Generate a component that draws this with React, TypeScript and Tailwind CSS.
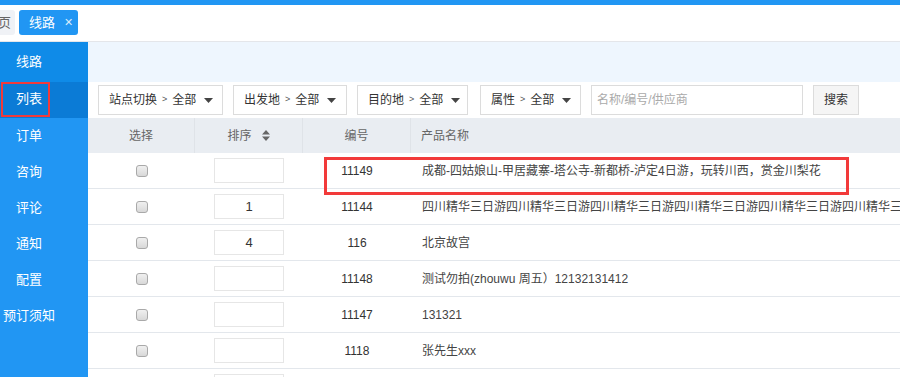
const menu = ['订单', '咨询', '评论', '通知', '配置', '预订须知']

const filters = [
  { label: '站点切换', cls: 'w-[125px]' },
  { label: '出发地', cls: 'w-[114px] ml-[10px]' },
  { label: '目的地', cls: 'w-[111px] ml-[10px]' },
  { label: '属性', cls: 'w-[101px] ml-[12px]' },
]

const rows = [
  { sort: '', id: '11149', name: '成都-四姑娘山-甲居藏寨-塔公寺-新都桥-泸定4日游，玩转川西，赏金川梨花', mark: true },
  { sort: '1', id: '11144', name: '四川精华三日游四川精华三日游四川精华三日游四川精华三日游四川精华三日游四川精华三日游四川精华三日游' },
  { sort: '4', id: '116', name: '北京故宫' },
  { sort: '', id: '11148', name: '测试勿拍(zhouwu 周五）12132131412' },
  { sort: '', id: '11147', name: '131321' },
  { sort: '', id: '1118', name: '张先生xxx' },
  { sort: '', id: '', name: '' },
]

function Caret() {
  return (
    <svg width="9" height="5" viewBox="0 0 9 5" className="ml-[8px]">
      <path d="M0 0h9L4.5 5z" fill="#444" />
    </svg>
  )
}

function SortIcon() {
  return (
    <svg width="8" height="11" viewBox="0 0 8 11" className="ml-[10px]">
      <path d="M4 0L8 4.5H0z M0 6.5h8L4 11z" fill="#666" />
    </svg>
  )
}

function Checkbox() {
  return <div className="w-[12px] h-[12px] rounded-[3px] border border-[#a9a9a9] bg-gradient-to-b from-[#f0f0f0] to-[#d8d8d8]" />
}

export default function App() {
  return (
    <div className="h-[377px] w-[900px] overflow-hidden bg-white text-[12px] text-[#333] font-['Liberation_Sans','Noto_Sans_CJK_SC',sans-serif]">
      <div className="h-[5px] bg-[#2196f3]" />
      <div className="h-[37px] flex items-center gap-[4px] border-b border-[#e4e6ea] pb-[1px]">
        <div className="w-[15px] h-[25px] bg-[#f0f2f6] rounded-r-[3px] overflow-hidden flex items-center justify-end text-[#666] text-[13px]">
          <span className="pr-[4px] whitespace-nowrap">首页</span>
        </div>
        <div className="h-[25px] w-[59px] rounded-[3px] bg-[#2196f3] text-white text-[13px] flex items-center pl-[10px]">
          <span>线路</span>
          <span className="ml-[9px] text-[11px] text-[#d8ebfc]">✕</span>
        </div>
      </div>
      <div className="flex h-[335px]">
        <div className="w-[88px] shrink-0 bg-[#2196f3] text-white text-[13px]">
          <div className="h-[40px] bg-[#0f8be8] flex items-center">
            <span className="w-[58px] text-center">线路</span>
          </div>
          <div className="relative h-[36px] bg-[#0b7bd6] flex items-center">
            <span className="w-[58px] text-center -mt-[3px]">列表</span>
            <div className="absolute left-[1px] top-0 w-[49px] h-[35px] border-2 border-[#f23a3a]" />
          </div>
          {menu.map((m) => (
            <div key={m} className="h-[36px] flex items-center">
              <span className="w-[58px] text-center">{m}</span>
            </div>
          ))}
        </div>
        <div className="flex-1 min-w-0">
          <div className="h-[40px] bg-[#eef6fe]" />
          <div className="h-[36px] flex items-center pl-[10px]">
            {filters.map((f) => (
              <div key={f.label} className={`${f.cls} shrink-0 h-[30px] border border-[#dcdcdc] flex items-center pl-[10px] text-[#333]`}>
                <span>{f.label}</span>
                <span className="mx-[5px] text-[9px] text-[#555]">&gt;</span>
                <span>全部</span>
                <Caret />
              </div>
            ))}
            <div className="ml-[10px] shrink-0 w-[212px] h-[30px] border border-[#dcdcdc] flex items-center pl-[5px] text-[#aaa]">
              名称/编号/供应商
            </div>
            <div className="ml-[10px] shrink-0 w-[46px] h-[30px] border border-[#dcdcdc] bg-[#f5f5f5] flex items-center justify-center">
              搜索
            </div>
          </div>
          <div className="w-[1000px]">
            <div className="h-[35px] bg-[#e9edf2] flex items-center text-[#666]">
              <div className="w-[107px] h-full flex items-center justify-center border-r border-[#dfe3e8]">选择</div>
              <div className="w-[108px] h-full flex items-center justify-center border-r border-[#dfe3e8]">
                排序
                <SortIcon />
              </div>
              <div className="w-[108px] h-full flex items-center justify-center border-r border-[#dfe3e8]">编号</div>
              <div className="flex-1 h-full flex items-center pl-[10px]">产品名称</div>
            </div>
            {rows.map((r, i) => (
              <div key={i} className="relative h-[36px] flex items-center border-b border-[#e3e7ec]">
                <div className="w-[107px] flex justify-center">
                  <Checkbox />
                </div>
                <div className="w-[108px] flex justify-center">
                  <div className="w-[70px] h-[25px] border border-[#e6e6e6] flex items-center justify-center text-[13px] text-[#333]">
                    {r.sort}
                  </div>
                </div>
                <div className="w-[108px] text-center text-[#333]">{r.id}</div>
                <div className="flex-1 pl-[11px] whitespace-nowrap overflow-hidden text-[#444]">{r.name}</div>
                {r.mark && (
                  <div className="absolute left-[236px] top-[4px] w-[525px] h-[38px] border-[3px] border-[#f23a3a] pointer-events-none" />
                )}
              </div>
            ))}
          </div>
        </div>
      </div>
    </div>
  )
}
